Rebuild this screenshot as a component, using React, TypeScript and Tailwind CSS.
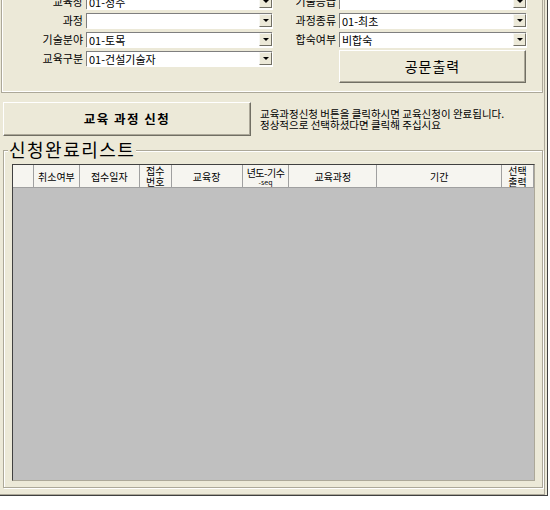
import React from 'react';

const font = { fontFamily: '"Noto Sans CJK KR", "Liberation Sans", sans-serif' };

function Combo({ value, width }: { value: string; width: string }) {
  return (
    <div className={`${width} h-[15px] flex bg-white border-t border-l border-[#7F7F7F] shadow-[1px_1px_0_#fff]`}>
      <div className="flex-1 pl-[2px] text-[11px] leading-[14px] text-black truncate">{value}</div>
      <div className="w-[13px] h-[13px] bg-[#ECE9D8] border-t border-l border-[#F8F8F4] border-r border-b border-r-[#716F64] border-b-[#716F64] flex items-center justify-center">
        <div className="w-0 h-0 border-l-[3px] border-r-[3px] border-t-[3px] border-l-transparent border-r-transparent border-t-black" />
      </div>
    </div>
  );
}

function Row({ label, value, labelW, comboW }: { label: string; value: string; labelW: string; comboW: string }) {
  return (
    <div className="flex items-center h-[15px] mb-[4px]">
      <div className={`${labelW} text-right pr-[3px] text-[11px] leading-[15px] text-black`}>{label}</div>
      <Combo value={value} width={comboW} />
    </div>
  );
}

const cols = [
  { w: 'w-[21px]', t: '' },
  { w: 'w-[46px]', t: '취소여부' },
  { w: 'w-[60px]', t: '접수일자' },
  { w: 'w-[32px]', t: '접수\n번호' },
  { w: 'w-[71px]', t: '교육장' },
  { w: 'w-[47px]', t: 'seq' },
  { w: 'w-[88px]', t: '교육과정' },
  { w: 'w-[125px]', t: '기간' },
  { w: 'w-[32px]', t: '선택\n출력' },
];

export default function App() {
  return (
    <div className="w-[550px] h-[510px] bg-white overflow-hidden" style={font}>
      <div className="w-[548px] h-[496px] bg-[#ECE9D8] border-r border-b border-[#404040] flex flex-col">
        <div className="h-[495px] mr-[2px] border-r border-b border-[#ACA899] flex flex-col">
          {/* 조건 입력 패널 */}
          <div className="h-[93px] ml-[1px] mr-[1px] border-l border-b border-r border-[#ACA899] shadow-[inset_1px_0_0_#fff,inset_0_-1px_0_#fff] flex">
            <div className="-mt-[6px] flex">
              <div className="flex flex-col">
                <Row label="교육장" value="01-청주" labelW="w-[84px]" comboW="w-[186px]" />
                <Row label="과정" value="" labelW="w-[84px]" comboW="w-[186px]" />
                <Row label="기술분야" value="01-토목" labelW="w-[84px]" comboW="w-[186px]" />
                <Row label="교육구분" value="01-건설기술자" labelW="w-[84px]" comboW="w-[186px]" />
              </div>
              <div className="flex flex-col">
                <Row label="기술등급" value="" labelW="w-[67px]" comboW="w-[187px]" />
                <Row label="과정종류" value="01-최초" labelW="w-[67px]" comboW="w-[187px]" />
                <Row label="합숙여부" value="비합숙" labelW="w-[67px]" comboW="w-[187px]" />
                <button className="ml-[67px] -mt-[1px] w-[187px] h-[33px] bg-[#ECE9D8] border border-t-white border-l-white border-r-[#716F64] border-b-[#716F64] shadow-[inset_-1px_-1px_0_#ACA899] text-[14px] tracking-[1px] text-black">
                  공문출력
                </button>
              </div>
            </div>
          </div>

          {/* 신청 버튼 */}
          <div className="flex items-start mt-[9px] ml-[3px]">
            <button className="w-[248px] h-[34px] bg-[#ECE9D8] border border-t-white border-l-white border-r-[#716F64] border-b-[#716F64] shadow-[inset_-1px_-1px_0_#ACA899] text-[12.5px] font-bold tracking-[1.5px] text-black">
              교육 과정 신청
            </button>
            <div className="ml-[9px] mt-[6px] text-[10.5px] leading-[11px] text-black">
              <div>교육과정신청 버튼을 클릭하시면 교육신청이 완료됩니다.</div>
              <div>정상적으로 선택하셨다면 클릭해 주십시요</div>
            </div>
          </div>

          {/* 신청완료리스트 */}
          <div className="relative mt-[14px] ml-[3px] w-[540px] h-[338px] border border-[#ACA899] shadow-[inset_1px_1px_0_#fff,1px_1px_0_#fff]">
            <div className="absolute -top-[14px] left-[4px] px-[1px] bg-[#ECE9D8] text-[18px] leading-[24px] tracking-[1.5px] text-black">
              신청완료리스트
            </div>
            <div className="mt-[13px] ml-[8px] w-[523px] h-[317px] border border-t-[#404040] border-l-[#404040] border-r-[#ACA899] border-b-[#ACA899] flex flex-col">
              <div className="flex h-[23px] bg-[#F6F5F0] border-b border-[#A0A0A0]">
                {cols.map((c, i) => (
                  <div
                    key={i}
                    className={`${c.w} h-full border-r border-[#A0A0A0] flex flex-col items-center justify-center text-[10px] leading-[11px] text-black text-center`}
                  >
                    {c.t === 'seq' ? (
                      <>
                        <span className="text-[10px] leading-[11px] tracking-[-0.5px]">년도-기수</span>
                        <span className="text-[7px] leading-[8px]">-seq</span>
                      </>
                    ) : (
                      c.t.split('\n').map((l, j) => <span key={j}>{l}</span>)
                    )}
                  </div>
                ))}
              </div>
              <div className="flex-1 bg-[#C0C0C0]" />
            </div>
          </div>
        </div>
      </div>
    </div>
  );
}
